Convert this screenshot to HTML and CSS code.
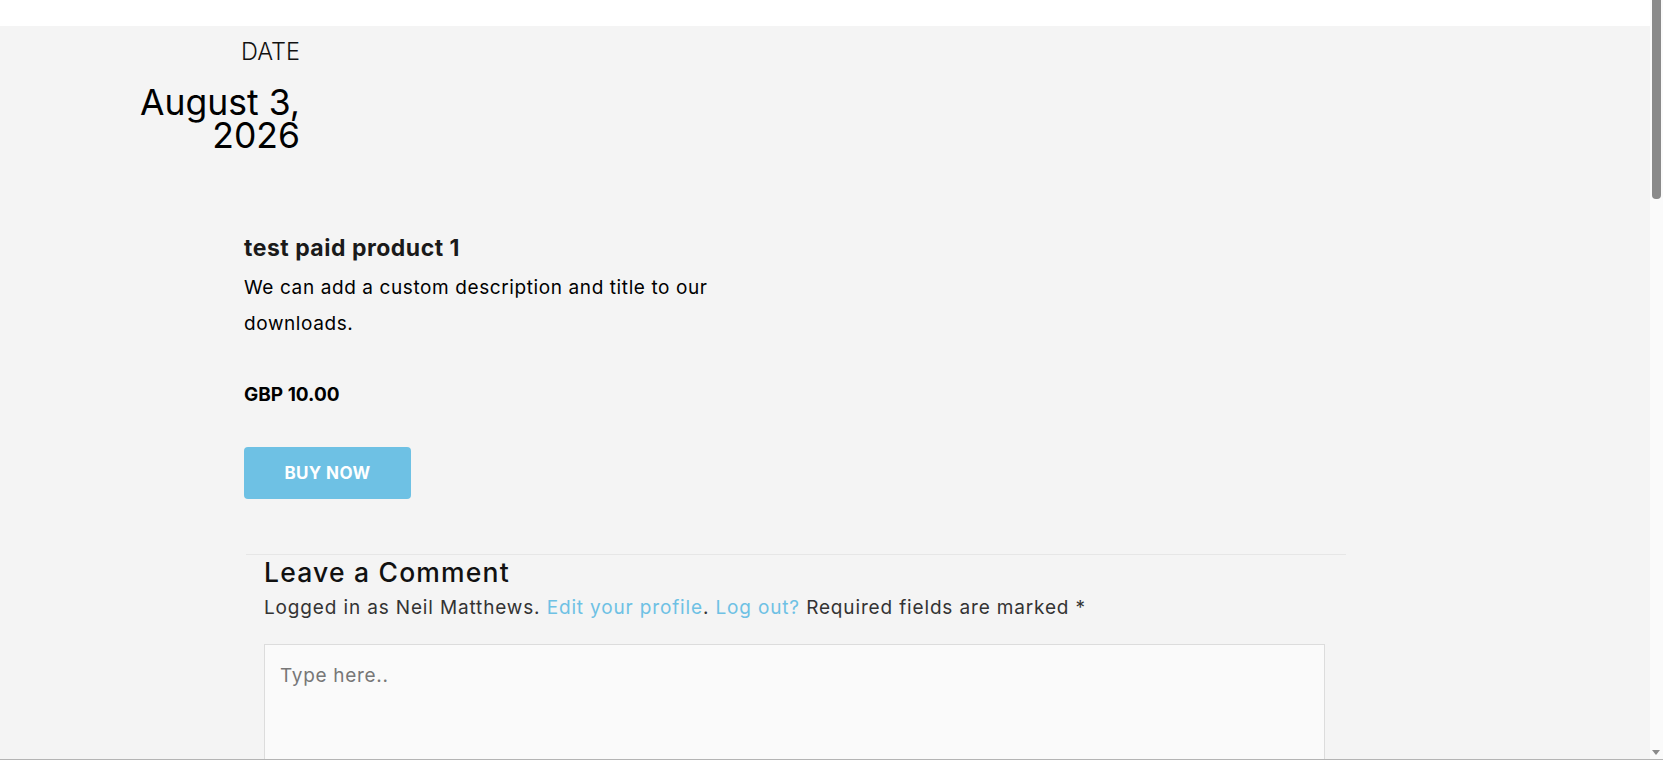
FILE: index.html
```html
<!DOCTYPE html>
<html lang="en">
<head>
<meta charset="utf-8">
<title>test paid product 1</title>
<link rel="stylesheet" href="styles.css">
</head>
<body>
<header class="topbar"></header>
<main class="page">
  <section class="date-section">
    <div class="date-col">
      <div class="date-label">DATE</div>
      <div class="date-value">August 3, 2026</div>
    </div>
  </section>
  <section class="product">
    <h2 class="product-title">test paid product 1</h2>
    <p class="product-desc">We can add a custom description and title to our downloads.</p>
    <p class="product-price">GBP 10.00</p>
    <a class="buy-btn" href="#">BUY NOW</a>
  </section>
  <section class="comments">
    <h3 class="comments-title">Leave a Comment</h3>
    <p class="logged-in">Logged in as Neil Matthews. <a href="#">Edit your profile</a>. <a href="#">Log out?</a> Required fields are marked *</p>
    <textarea class="comment-box" placeholder="Type here.."></textarea>
  </section>
</main>
<div class="fake-scrollbar"><div class="thumb"></div><div class="arrow"></div></div>
<div class="window-edge"></div>
</body>
</html>
```

FILE: styles.css
```css
* { box-sizing: border-box; }
html, body { margin: 0; padding: 0; }
body {
  font-family: Inter, "Open Sans", sans-serif;
  color: #111;
  background: #f4f4f4;
  overflow: hidden;
}
.topbar {
  height: 26px;
  background: #fff;
}
.page {
  background: #f4f4f4;
  padding-bottom: 200px;
}
.date-section {
  padding: 11px 0 0 98px;
}
.date-col {
  width: 202px;
  text-align: right;
}
.date-label {
  font-size: 23.5px;
  font-weight: 300;
  line-height: 30px;
  color: #111;
}
.date-value {
  margin-top: 19px;
  font-size: 35.5px;
  font-weight: 400;
  line-height: 33px;
  color: #000;
}
.product {
  padding-left: 244px;
  padding-top: 82px;
  width: 764px;
}
.product-title {
  margin: 0;
  font-size: 23px;
  font-weight: 700;
  letter-spacing: 0.5px;
  line-height: 28.6px;
  color: #1a1a1a;
}
.product-desc {
  margin: 7px 0 0;
  font-size: 19px;
  letter-spacing: 0.6px;
  line-height: 36px;
  color: #000;
}
.product-price {
  margin: 40px 0 0;
  font-size: 19px;
  font-weight: 700;
  line-height: 26.6px;
  color: #000;
}
.buy-btn {
  display: flex;
  align-items: center;
  justify-content: center;
  margin-top: 39px;
  width: 167px;
  height: 52px;
  background: #6ec1e4;
  border-radius: 4px;
  color: #fff;
  font-size: 17px;
  font-weight: 700;
  letter-spacing: 0.4px;
  text-decoration: none;
}
.comments {
  margin: 55px 0 0 246px;
  width: 1100px;
  border-top: 1px solid #e6e6e6;
  padding: 3px 21px 0 18px;
}
.comments-title {
  margin: 0;
  font-size: 26.5px;
  font-weight: 500;
  letter-spacing: 1.2px;
  line-height: 28.8px;
  color: #111;
}
.logged-in {
  margin: 8px 0 0;
  font-size: 19px;
  letter-spacing: 0.85px;
  line-height: 25.5px;
  color: #333;
}
.logged-in a {
  color: #6ec1e4;
  text-decoration: none;
}
.comment-box {
  display: block;
  margin-top: 24px;
  width: 100%;
  height: 220px;
  padding: 18px 15px;
  background: #fafafa;
  border: 1px solid #dcdcdc;
  font-family: inherit;
  font-size: 19px;
  letter-spacing: 0.7px;
  line-height: 25.5px;
  resize: none;
}
.comment-box::placeholder {
  color: #777;
}
.fake-scrollbar {
  position: fixed;
  top: 0;
  right: 0;
  width: 13px;
  height: 760px;
  background: #fafafa;
}
.fake-scrollbar .thumb {
  margin: 0 auto;
  width: 9px;
  height: 199px;
  background: #8a8a8a;
  border-radius: 0 0 4px 4px;
}
.fake-scrollbar .arrow {
  position: absolute;
  bottom: 5px;
  left: 2px;
  width: 0;
  height: 0;
  border-left: 4.5px solid transparent;
  border-right: 4.5px solid transparent;
  border-top: 5px solid #8a8a8a;
}
.window-edge {
  position: fixed;
  left: 0;
  right: 0;
  bottom: 0;
  height: 1px;
  background: #b4b4b4;
}
```
